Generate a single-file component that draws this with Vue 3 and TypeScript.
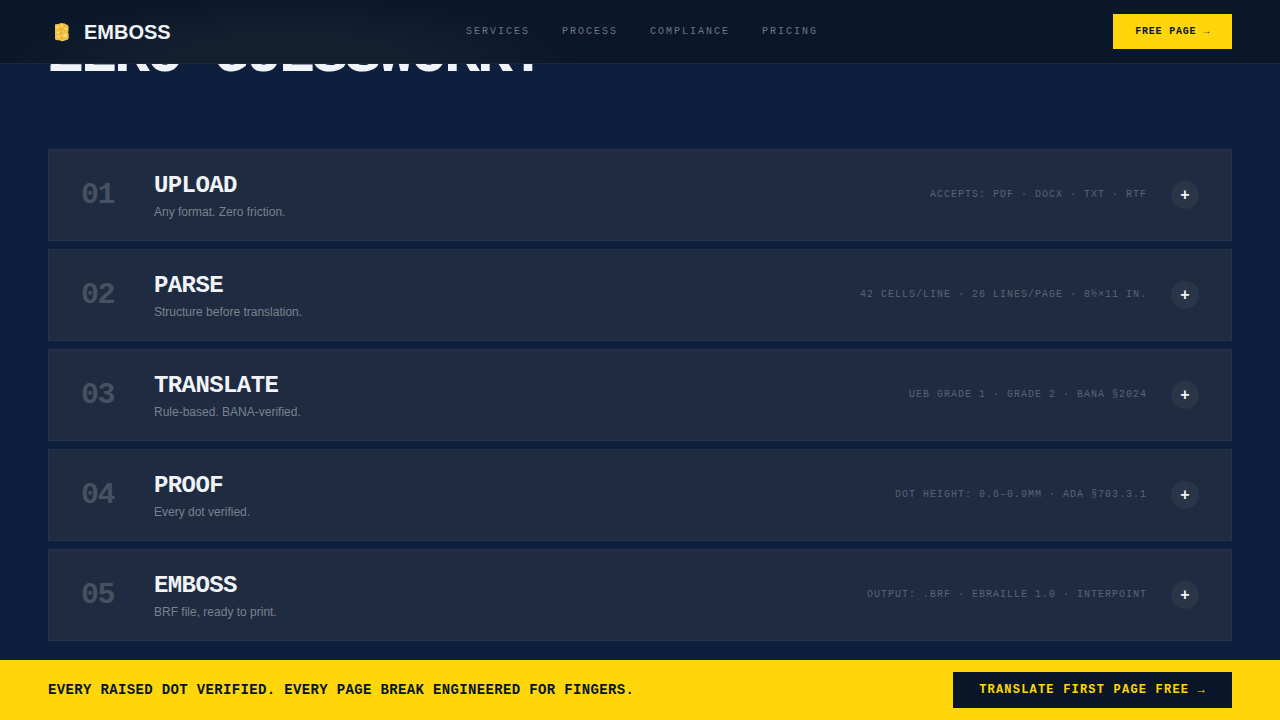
<script setup lang="ts">
interface Step {
  num: string
  title: string
  sub: string
  spec: string
}

const links: string[] = ['SERVICES', 'PROCESS', 'COMPLIANCE', 'PRICING']

const steps: Step[] = [
  { num: '01', title: 'UPLOAD', sub: 'Any format. Zero friction.', spec: 'ACCEPTS: PDF · DOCX · TXT · RTF' },
  { num: '02', title: 'PARSE', sub: 'Structure before translation.', spec: '42 CELLS/LINE · 26 LINES/PAGE · 8½×11 IN.' },
  { num: '03', title: 'TRANSLATE', sub: 'Rule-based. BANA-verified.', spec: 'UEB GRADE 1 · GRADE 2 · BANA §2024' },
  { num: '04', title: 'PROOF', sub: 'Every dot verified.', spec: 'DOT HEIGHT: 0.6–0.9MM · ADA §703.3.1' },
  { num: '05', title: 'EMBOSS', sub: 'BRF file, ready to print.', spec: 'OUTPUT: .BRF · EBRAILLE 1.0 · INTERPOINT' },
]
</script>

<template>
  <div class="page">
    <header class="topbar">
      <a class="brand" href="#">
        <svg class="mark" viewBox="0 0 28 28" aria-hidden="true">
          <path
            d="M7.500 6.200L10.500 6Q12.500 4.800 15 5.200Q17 5.200 17.800 6.200Q20.300 6.500 20.600 8.500V12Q20.600 13.300 20 14Q20.900 15.500 20.700 18V20Q20.500 21.800 18.500 22L15.500 23Q13.500 23.600 12 22.500L8 22Q7 21.800 7 20.500V7Q7 6.200 7.500 6.200Z"
            fill="#f0c243"
          />
          <g fill="#ffe791">
            <circle cx="9.500" cy="9" r="1.100" />
            <circle cx="14" cy="7.500" r="1" />
            <circle cx="17.500" cy="10.500" r="1" />
            <circle cx="10" cy="14.500" r="1" />
            <circle cx="17" cy="17.500" r="1.500" />
            <circle cx="10.500" cy="18.500" r="1.100" />
          </g>
          <g stroke="#d49c2e" stroke-width="0.900" fill="none">
            <path d="M11.500 11L13.500 12L15.500 11M12 16L14 14.500M13 20L15 20.500M16.500 7.500L18 8.500" />
          </g>
        </svg>
        <span>EMBOSS</span>
      </a>
      <nav class="links" aria-label="Main">
        <a v-for="link in links" :key="link" :href="'#' + link.toLowerCase()">{{ link }}</a>
      </nav>
      <button class="cta" type="button">FREE PAGE →</button>
    </header>

    <main class="process">
      <h2 class="headline">ZERO GUESSWORK.</h2>
      <ol class="steps">
        <li v-for="step in steps" :key="step.num" class="step">
          <span class="num">{{ step.num }}</span>
          <div class="copy">
            <h3>{{ step.title }}</h3>
            <p>{{ step.sub }}</p>
          </div>
          <span class="spec">{{ step.spec }}</span>
          <button class="toggle" type="button" :aria-label="'Expand ' + step.title">+</button>
        </li>
      </ol>
    </main>

    <aside class="banner">
      <p>EVERY RAISED DOT VERIFIED. EVERY PAGE BREAK ENGINEERED FOR FINGERS.</p>
      <button type="button">TRANSLATE FIRST PAGE FREE →</button>
    </aside>
  </div>
</template>

<style>
body {
  margin: 0;
  background: #0d1f3c;
}
</style>

<style scoped>
.page {
  --mono: "Liberation Mono", "Courier New", monospace;
  --sans: "Liberation Sans", Arial, sans-serif;
  display: flex;
  flex-direction: column;
  height: 100vh;
  overflow: hidden;
  background: #0d1f3c;
  color: #f0f4f8;
  font-family: var(--sans);
}

h2, h3, p, ol {
  margin: 0;
  padding: 0;
}

button {
  border: 0;
  border-radius: 0;
  cursor: pointer;
}

a {
  color: inherit;
  text-decoration: none;
}

.topbar {
  position: sticky;
  top: 0;
  z-index: 2;
  flex: none;
  display: flex;
  align-items: center;
  justify-content: space-between;
  box-sizing: border-box;
  height: 64px;
  padding: 0 48px;
  border-bottom: 1px solid #1b2839;
  background:
    radial-gradient(ellipse 300px 70px at 290px 64px, rgba(255, 255, 255, 0.04) 40%, transparent),
    #0a1728;
}

.brand {
  display: flex;
  align-items: center;
  gap: 8px;
  font-size: 20px;
  font-weight: 700;
  line-height: 24px;
}

.mark {
  width: 28px;
  height: 28px;
}

.links {
  display: flex;
  gap: 32px;
  color: #6b7685;
  font-family: var(--mono);
  font-size: 10px;
  letter-spacing: 2px;
}

.cta {
  padding: 12px 22px;
  background: #ffd60a;
  color: #0a1628;
  font: 700 10px/11px var(--mono);
  letter-spacing: 0.08em;
}

.process {
  flex: 1;
  padding: 0 48px;
}

.headline {
  margin-top: -39px;
  margin-bottom: 64px;
  font: 700 60px/60px var(--mono);
  letter-spacing: -3px;
}

.steps {
  display: grid;
  gap: 8px;
  list-style: none;
}

.step {
  display: flex;
  align-items: center;
  gap: 24px;
  box-sizing: border-box;
  padding: 18px 32px;
  border: 1px solid #27354c;
  background: #1f2b41;
}

.num {
  margin-right: 16px;
  color: #465261;
  font: 700 30px/32px var(--mono);
  letter-spacing: -0.05em;
}

.copy {
  flex: 1;
  padding-top: 2px;
}

.copy h3 {
  font: 700 24px/32px var(--mono);
  letter-spacing: -0.025em;
}

.copy p {
  color: #79828f;
  font-size: 12px;
  line-height: 20px;
}

.spec {
  color: #586475;
  font-family: var(--mono);
  font-size: 10px;
  line-height: 16px;
  letter-spacing: 1px;
}

.toggle {
  width: 28px;
  height: 28px;
  padding: 0;
  border-radius: 50%;
  background: #2a3648;
  color: #f0f4f8;
  font: 700 16px/28px var(--sans);
}

.banner {
  position: relative;
  flex: none;
  display: flex;
  align-items: center;
  justify-content: space-between;
  box-sizing: border-box;
  padding: 12px 48px;
  background: #ffd60a;
  color: #0a1628;
}

.banner p {
  font: 700 14px/20px var(--mono);
  letter-spacing: 0.025em;
}

.banner button {
  padding: 11px 26px;
  background: #0a1628;
  color: #ffd60a;
  font: 700 12px/14px var(--mono);
  letter-spacing: 0.1em;
}
</style>
